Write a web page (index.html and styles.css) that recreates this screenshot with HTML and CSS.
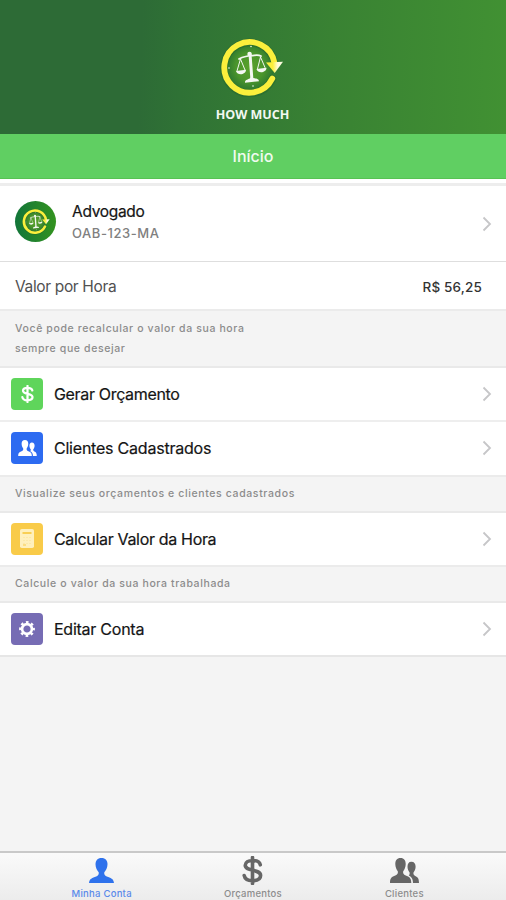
FILE: index.html
```html
<!DOCTYPE html>
<html lang="pt-BR">
<head>
<meta charset="utf-8">
<title>How Much</title>
<link rel="stylesheet" href="styles.css">
</head>
<body>
<svg class="defs" aria-hidden="true">
  <defs>
    <radialGradient id="disc"><stop offset="0" stop-color="#5aa12b"/><stop offset=".6" stop-color="#4a952c"/><stop offset="1" stop-color="#2c7630"/></radialGradient>
    <linearGradient id="tip"><stop offset=".4" stop-color="#fbef3c"/><stop offset=".7" stop-color="#fffde0"/></linearGradient>
    <symbol id="logo" viewBox="0 0 66 60">
      <circle cx="30" cy="30" r="24" fill="url(#disc)"/>
      <path d="M52.500 42A25.500 25.500 0 1 1 54.500 26" fill="none" stroke="#23652b" stroke-width="7.600" stroke-linecap="round" opacity=".5"/>
      <path d="M52.300 41.500A25.300 25.300 0 1 1 54.500 26" fill="none" stroke="#fbef3c" stroke-width="5.800" stroke-linecap="round"/>
      <path d="M46 25.500l17-.8-8.300 11.300z" fill="url(#tip)"/>
      <g fill="none" stroke="#f4f7f2" stroke-linecap="round" stroke-linejoin="round">
        <path d="M30 17l1.800 24" stroke-width="3"/>
        <path d="M19 22c4-3 7-2 11-3.500 4 .5 7-1.500 11 .5" stroke-width="1.700"/>
        <path d="M20.500 22l-3.500 12M20.500 22l4.500 11M40.500 20l-3 12M40.500 20l4.500 10.500" stroke-width="1"/>
      </g>
      <g fill="#f4f7f2">
        <circle cx="29.500" cy="17" r="2.200"/>
        <path d="M16 34l10-1.300c0 5-8.500 6.500-10 1.300zM36.500 32l10-1.300c0 5-8.500 6.500-10 1.300zM25 44.500c1-2.500 5-2 6-4.500 2 2 5 .5 7.500 2.700l.5 1.500-14 1.600z"/>
        <circle cx="31" cy="9.500" r=".8"/><circle cx="9" cy="31" r=".8"/><circle cx="33" cy="49" r=".8"/>
      </g>
    </symbol>
    <symbol id="person" viewBox="0 0 25 25">
      <path d="M12.500 0c4 0 6 2.600 6 6.300 0 3.800-1.700 6-3.200 7.900-.4 2 .4 3.300 2.500 4.200 3.900 1.700 6.700 1.800 7.200 6.600H0c.5-4.800 3.300-4.900 7.200-6.600 2.100-.9 2.900-2.200 2.500-4.200C8.200 12.300 6.500 10.100 6.500 6.300 6.500 2.600 8.500 0 12.500 0z"/>
    </symbol>
    <symbol id="people" viewBox="0 0 29 25">
      <path d="M10.500 0c3.600 0 5.200 2.500 5.200 6 0 3.400-1.300 5.600-2.500 7.300-.4 2.200.3 3.200 2.500 4.100 3.600 1.400 5.500 2.300 5.600 7.600H0c0-5.300 1.900-6.200 5.300-7.600 2.200-.9 2.900-1.900 2.500-4.100-1.200-1.700-2.500-3.900-2.500-7.300 0-3.500 1.600-6 5.200-6z"/>
      <path d="M21.300 3.800c3.100 0 4.300 2 4.300 5 0 2.500-1 4.200-2.100 5.700-.3 1.700.2 2.700 1.700 3.400 2.600 1.200 3.800 2.300 3.800 7.100h-6c-.1-4.300-1.300-6-4.200-7.600.8-.7 1-1.700.8-2.900-1.100-1.500-2.100-3.200-2.100-5.700 0-3 1.200-5 3.800-5z"/>
    </symbol>
    <symbol id="dollar" viewBox="0 0 20 28">
      <path d="M17.500 8.500C17 5.500 14 4.300 10 4.300c-4 0-7 1.700-7 4.700 0 6.300 14.800 3.200 14.800 9.800 0 3.300-3.300 5-7.800 5s-7.400-1.600-8-5M10 1.500v25" fill="none" stroke="currentColor" stroke-width="3.500" stroke-linecap="round"/>
    </symbol>
    <symbol id="chevron" viewBox="0 0 10 16">
      <path d="M1.500 1.500L8 8l-6.500 6.500" fill="none" stroke="#c6c6c8" stroke-width="1.800"/>
    </symbol>
  </defs>
</svg>
<header class="brand">
  <svg class="brand-logo"><use href="#logo"/></svg>
  <div class="brand-name">HOW MUCH</div>
</header>
<h1 class="title">Início</h1>
<main class="content">
  <a class="profile">
    <span class="avatar"><svg><use href="#logo"/></svg></span>
    <span class="who"><span class="name">Advogado</span><span class="oab">OAB-123-MA</span></span>
    <svg class="chevron"><use href="#chevron"/></svg>
  </a>
  <div class="rate"><span class="rate-label">Valor por Hora</span><span class="rate-value">R$ 56,25</span></div>
  <p class="note note-tall">Você pode recalcular o valor da sua hora<br>sempre que desejar</p>
  <a class="row row-split">
    <span class="tile green"><svg class="i-dollar"><use href="#dollar"/></svg></span>
    <span class="label budget">Gerar Orçamento</span>
    <svg class="chevron"><use href="#chevron"/></svg>
  </a>
  <a class="row">
    <span class="tile blue"><svg class="i-people"><use href="#people"/></svg></span>
    <span class="label clients">Clientes Cadastrados</span>
    <svg class="chevron"><use href="#chevron"/></svg>
  </a>
  <p class="note">Visualize seus orçamentos e clientes cadastrados</p>
  <a class="row">
    <span class="tile yellow"><svg class="i-calc" viewBox="0 0 14 19"><rect width="14" height="19" rx="1.800" fill="#fff0bd"/><path d="M2.500 4h9" stroke="#f9cb49" stroke-width="1.800"/><path d="M3 8.500h8M3 11.500h8M3 14.500h8" stroke="#fde9a8" stroke-width="1.200" stroke-dasharray="2 1"/><path d="M3 16h3" stroke="#f9cb49"/></svg></span>
    <span class="label calc">Calcular Valor da Hora</span>
    <svg class="chevron"><use href="#chevron"/></svg>
  </a>
  <p class="note">Calcule o valor da sua hora trabalhada</p>
  <a class="row">
    <span class="tile purple"><svg class="i-gear" viewBox="-8 -8 16 16"><circle r="4.900" fill="none" stroke="#fff" stroke-width="2.600"/><circle r="6.800" fill="none" stroke="#fff" stroke-width="2.200" stroke-dasharray="2.670" stroke-dashoffset="1.330"/></svg></span>
    <span class="label account">Editar Conta</span>
    <svg class="chevron"><use href="#chevron"/></svg>
  </a>
</main>
<nav class="tabs">
  <a class="tab active"><svg class="t-person"><use href="#person"/></svg><span>Minha Conta</span></a>
  <a class="tab"><svg class="t-dollar"><use href="#dollar"/></svg><span>Orçamentos</span></a>
  <a class="tab"><svg class="t-people"><use href="#people"/></svg><span>Clientes</span></a>
</nav>
</body>
</html>
```
FILE: styles.css
```css
* { box-sizing: border-box; }
body {
  margin: 0;
  height: 900px;
  display: flex;
  flex-direction: column;
  overflow: hidden;
  background: #f4f4f4;
  font-family: Inter, "Liberation Sans", sans-serif;
  color: #151515;
}
svg { display: block; fill: currentColor; }
.defs { position: absolute; width: 0; height: 0; }
.brand {
  height: 134px;
  padding-top: 37px;
  display: flex;
  flex-direction: column;
  align-items: center;
  background: linear-gradient(92deg, #2d6b36 0%, #2d6b36 28%, #2f7235 36%, #398233 65%, #419133 100%);
}
.brand-logo { width: 66px; height: 60px; margin-right: 1px; }
.brand-name {
  margin-top: 9px;
  margin-right: 1px;
  font: 700 12.500px/18px "Open Sans", sans-serif;
  color: #f2f8f1;
}
.title {
  margin: 0;
  height: 45px;
  font-size: 16px;
  font-weight: 500;
  line-height: 45px;
  text-align: center;
  color: #f0fbef;
  background: #60cf62;
  border-bottom: 1px solid #57c253;
}
.content { flex: 1; padding-top: 4px; background: linear-gradient(#fff 5px, #f4f4f4 5px); }
.profile, .rate, .row { display: flex; align-items: center; background: #fff; }
.profile {
  height: 79px;
  padding: 0 14px 0 15px;
  border-top: 3px solid #ededed;
  border-bottom: 1px solid #dedede;
}
.avatar {
  width: 41px;
  height: 41px;
  margin: -4px 16px 0 0;
  border-radius: 50%;
  display: grid;
  place-items: center;
  background: linear-gradient(90deg, #12753a, #33931f);
}
.avatar svg { width: 29px; height: 27px; margin-left: 1px; }
.who { flex: 1; display: flex; flex-direction: column; margin-top: -2px; }
.name { font-size: 15.500px; line-height: 22px; letter-spacing: -.3px; -webkit-text-stroke: .2px; }
.oab { font-size: 13px; line-height: 21px; font-weight: 500; color: #808080; letter-spacing: .55px; }
.chevron { width: 10px; height: 16px; }
.rate { height: 47px; padding: 2px 24px 0 15px; justify-content: space-between; }
.rate-label { font-size: 15.500px; letter-spacing: -.35px; color: #515151; }
.rate-value { font-size: 13.500px; font-weight: 500; letter-spacing: .15px; color: #333; }
.note {
  margin: 0;
  height: 38px;
  padding: 7px 15px;
  font-size: 10.500px;
  font-weight: 500;
  line-height: 20px;
  letter-spacing: .62px;
  color: #8c8c8c;
  background: #f4f4f4;
  border-top: 2px solid #ebebeb;
  border-bottom: 2px solid #e9e9e9;
}
.note-tall { height: 59px; padding-top: 8px; }
.row { height: 52.500px; padding: 0 14px 0 11px; }
.row-split { height: 54px; border-bottom: 2px solid #eee; }
.row:last-child { height: 54px; border-bottom: 2px solid #e6e6e6; }
.tile {
  width: 32px;
  height: 32px;
  margin-right: 11px;
  border-radius: 4px;
  display: grid;
  place-items: center;
  color: #fff;
}
.green { background: #5fd55b; }
.blue { background: #2d6bf1; }
.yellow { background: #f9cb49; }
.purple { background: #766cb4; }
.i-dollar { width: 13px; height: 18px; }
.i-people { width: 19px; height: 16px; }
.i-calc { width: 14px; height: 19px; }
.i-gear { width: 16px; height: 16px; }
.label { flex: 1; font-size: 16px; letter-spacing: -.33px; -webkit-text-stroke: .2px; }
.clients { letter-spacing: -.22px; }
.account { letter-spacing: -.25px; }
.tabs {
  height: 49px;
  padding: 0 26px;
  display: flex;
  background: linear-gradient(#fafafa, #ececec);
  border-top: 2px solid #c9c9c9;
}
.tab {
  flex: 1;
  display: flex;
  flex-direction: column;
  align-items: center;
  justify-content: flex-end;
  font-size: 9.500px;
  font-weight: 500;
  line-height: 12px;
  letter-spacing: .25px;
  color: #8c8c8c;
}
.tab svg { color: #666; }
.tab.active { color: #5a8aea; }
.tab.active svg { color: #2f72ec; }
.t-person { width: 25px; height: 25px; margin-bottom: 5px; }
.t-dollar { width: 21px; height: 29px; margin-bottom: 3px; }
.t-people { width: 29px; height: 25px; margin-bottom: 5px; }
```
